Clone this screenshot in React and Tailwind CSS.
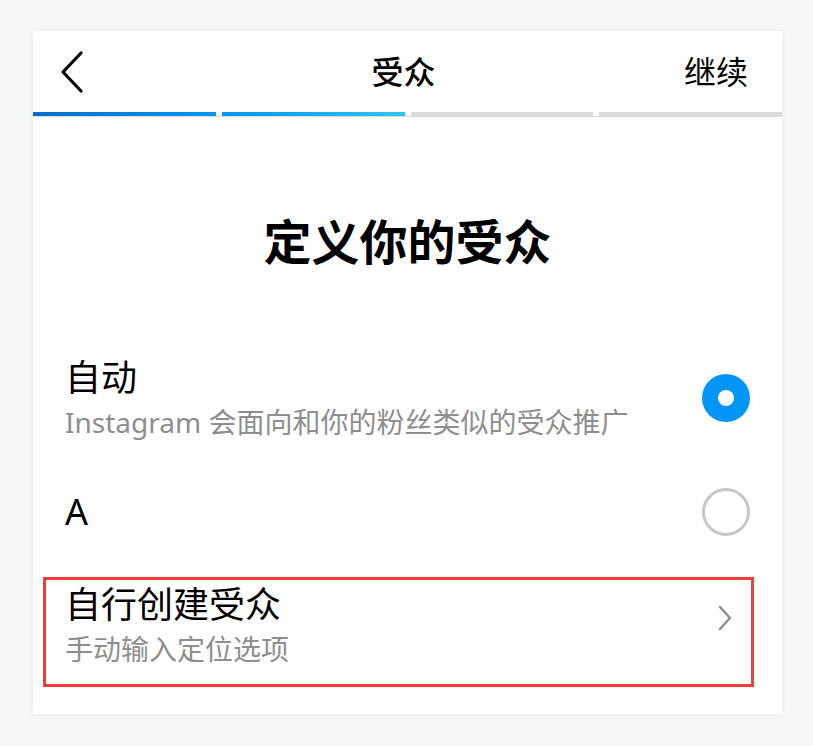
import React from 'react';

const font = { fontFamily: '"Noto Sans", "Noto Sans CJK SC", sans-serif' };

function Radio({ checked }) {
    if (checked) {
        return (
            <div className="w-[48px] h-[48px] rounded-full bg-[#0095f6] flex items-center justify-center shrink-0">
                <div className="w-[16px] h-[16px] rounded-full bg-white" />
            </div>
        );
    }
    return <div className="w-[48px] h-[48px] rounded-full border-[3px] border-[#c7c7c7] shrink-0" />;
}

export default function App() {
    return (
        <div className="min-h-[746px] bg-[#f6f7f9] pt-[31px] pl-[33px]" style={font}>
            <div className="w-[749px] bg-white shadow-[0_0_8px_rgba(0,0,0,0.06)] pb-[27px]">
                {/* header */}
                <div className="h-[81px] grid grid-cols-[1fr_auto_1fr] items-center pl-[26px] pr-[34px]">
                    <button className="justify-self-start text-black">
                        <svg width="26" height="44" viewBox="0 0 26 44" fill="none">
                            <path d="M22 3 L4 22 L22 41" stroke="#000" strokeWidth="3.2" strokeLinecap="round" strokeLinejoin="round" />
                        </svg>
                    </button>
                    <h1 className="text-[32px] font-medium text-black leading-none">受众</h1>
                    <button className="justify-self-end text-[32px] text-black leading-none">继续</button>
                </div>

                {/* progress */}
                <div className="flex gap-[6px] border-b border-[#dbdbdb]">
                    <div className="flex-1 h-[4px] bg-linear-to-r from-[#006fc8] to-[#0095f6]" />
                    <div className="flex-1 h-[4px] bg-linear-to-r from-[#0095f6] to-[#2ec5f3]" />
                    <div className="flex-1 h-[4px] bg-[#dbdbdb]" />
                    <div className="flex-1 h-[4px] bg-[#dbdbdb]" />
                </div>

                <h2 className="mt-[91px] text-center text-[48px] leading-[67px] font-bold text-black">定义你的受众</h2>

                {/* options */}
                <div className="mt-[79px] flex items-center justify-between px-[32px]">
                    <div>
                        <div className="text-[36px] leading-[48px] text-black">自动</div>
                        <div className="text-[28px] leading-[40px] text-[#8e8e8e]">Instagram 会面向和你的粉丝类似的受众推广</div>
                    </div>
                    <Radio checked />
                </div>

                <div className="mt-[46px] flex items-center justify-between px-[32px]">
                    <div className="text-[36px] leading-[48px] text-black">A</div>
                    <Radio />
                </div>

                <div className="mt-[41px] ml-[10px] mr-[28px] border-[3px] border-[#f23d3d] pl-[19px] pr-[18px] pt-[1px] pb-[15px] flex items-center justify-between">
                    <div>
                        <div className="text-[36px] leading-[48px] text-black">自行创建受众</div>
                        <div className="text-[28px] leading-[40px] text-[#8e8e8e]">手动输入定位选项</div>
                    </div>
                    <svg width="16" height="28" viewBox="0 0 16 28" fill="none" className="mb-[14px]">
                        <path d="M3 3 L13 14 L3 25" stroke="#8e8e8e" strokeWidth="2.4" strokeLinecap="round" strokeLinejoin="round" />
                    </svg>
                </div>
            </div>
        </div>
    );
}
